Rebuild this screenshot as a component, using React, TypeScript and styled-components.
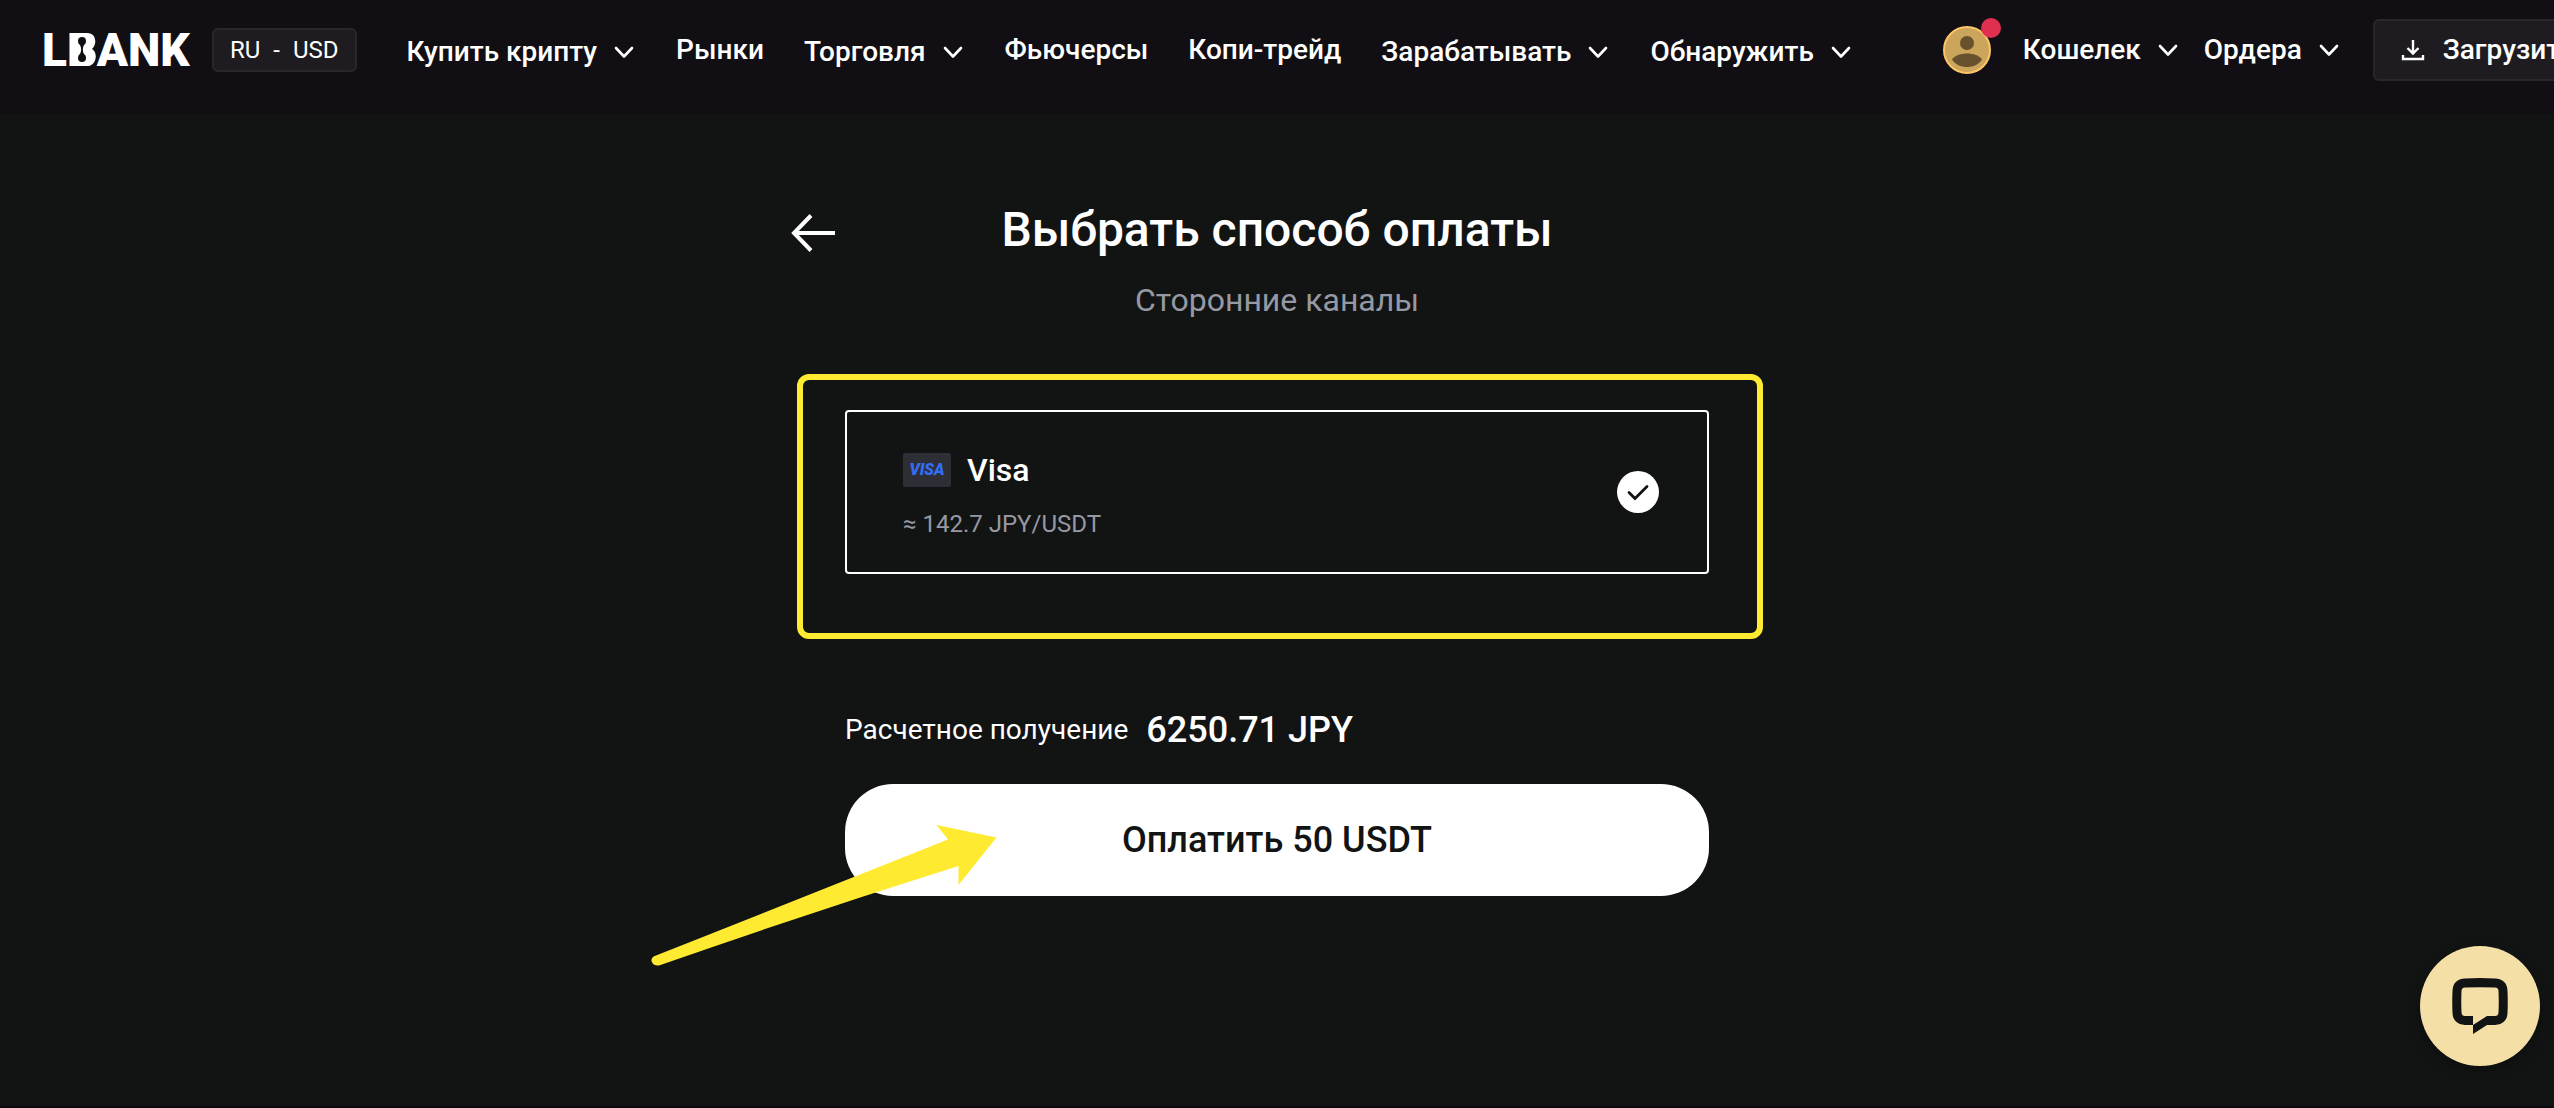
import React from "react";
import styled, { createGlobalStyle } from "styled-components";

const GlobalStyle = createGlobalStyle`
  * { box-sizing: border-box; }
  body {
    margin: 0;
    background: #121413;
    color: #fff;
    font-family: Roboto, "Noto Sans", sans-serif;
    overflow-x: hidden;
  }
  button, input { font: inherit; color: inherit; }
`;

const Page = styled.div`
  display: flex;
  flex-direction: column;
  min-height: 100vh;
  overflow: hidden;
  border-bottom: 2px solid #0b080e;
`;

const Header = styled.header`
  display: flex;
  align-items: center;
  padding: 0 42px 14px;
  height: 114px;
  background: #110f14;
  white-space: nowrap;
  font-size: 28px;
  line-height: 36px;
  font-weight: 500;
`;

const Logo = styled.a`
  position: relative;
  flex: none;
  width: 150px;
  margin-right: 20px;
  color: #fff;
  font-size: 46px;
  line-height: 52px;
  font-weight: 900;
  text-decoration: none;
`;

const LogoMark = styled.svg`
  position: absolute;
  left: 28px;
  top: 9px;
`;

const LocaleButton = styled.button`
  flex: none;
  display: flex;
  align-items: center;
  gap: 13px;
  height: 44px;
  padding: 0 16px;
  border: 2px solid #29272c;
  border-radius: 6px;
  background: #1e1c21;
  font-size: 24px;
  font-weight: 400;
`;

const Nav = styled.nav`
  flex: none;
  display: flex;
  align-items: center;
  gap: 40px;
  margin: 0 90px 0 50px;
`;

const NavLink = styled.a`
  color: #fff;
  text-decoration: none;
`;

const MenuButton = styled.button<{ $lowered?: boolean }>`
  display: flex;
  align-items: center;
  gap: 15px;
  padding: ${(p) => (p.$lowered ? "4px 0 0" : "0")};
  border: 0;
  background: none;
`;

const Account = styled.div`
  flex: none;
  display: flex;
  align-items: center;
`;

const AvatarButton = styled.button`
  position: relative;
  display: block;
  width: 48px;
  height: 48px;
  margin-right: 32px;
  padding: 0;
  border: 0;
  background: none;
`;

const Badge = styled.span`
  position: absolute;
  top: -8px;
  right: -10px;
  width: 20px;
  height: 20px;
  border-radius: 50%;
  background: #e03050;
`;

const AccountMenus = styled.div`
  display: flex;
  gap: 24px;
  margin-right: 32px;
`;

const DownloadButton = styled.button`
  display: flex;
  align-items: center;
  gap: 18px;
  height: 62px;
  padding: 0 26px;
  border: 2px solid #29272c;
  border-radius: 6px;
  background: #1e1c21;
`;

const Main = styled.main`
  width: 100%;
  max-width: 972px;
  margin: 0 auto;
  padding: 84px 0 60px;
`;

const TitleRow = styled.div`
  display: grid;
  grid-template-columns: 44px 1fr 44px;
  align-items: center;
`;

const BackButton = styled.button`
  display: block;
  height: 44px;
  padding: 0;
  border: 0;
  background: none;
`;

const Title = styled.h1`
  margin: 0;
  text-align: center;
  font-size: 48px;
  line-height: 64px;
  font-weight: 500;
`;

const Subtitle = styled.p`
  margin: 18px 0 0;
  text-align: center;
  color: #9699a3;
  font-size: 32px;
  line-height: 40px;
`;

const Panel = styled.form`
  margin: 90px 54px 0;
`;

const MethodArea = styled.div`
  position: relative;
`;

const Highlight = styled.div`
  position: absolute;
  inset: -36px -54px -65px -48px;
  border: 6px solid #ffea32;
  border-radius: 12px;
  pointer-events: none;
`;

const MethodCard = styled.label`
  display: flex;
  align-items: center;
  justify-content: space-between;
  padding-right: 48px;
  border: 2px solid #fff;
  border-radius: 4px;
`;

const MethodInfo = styled.div`
  display: flex;
  flex-direction: column;
  gap: 18px;
  padding: 38px 0 32px 56px;
`;

const MethodName = styled.div`
  display: flex;
  align-items: center;
  gap: 16px;
  font-size: 32px;
  line-height: 40px;
  font-weight: 500;
`;

const CardBrand = styled.span`
  display: grid;
  place-items: center;
  width: 48px;
  height: 34px;
  border-radius: 2px;
  background: #2e2e36;
  color: #346df1;
  font-size: 16px;
  line-height: 20px;
  font-style: italic;
  font-weight: 900;
`;

const Rate = styled.div`
  color: #9699a3;
  font-size: 24px;
  line-height: 32px;
`;

const RadioMark = styled.span`
  display: grid;
  place-items: center;
  > * { grid-area: 1 / 1; }
  > svg { pointer-events: none; }
`;

const Radio = styled.input`
  appearance: none;
  width: 42px;
  height: 42px;
  margin: 0;
  border-radius: 50%;
  background: #fff;
`;

const Summary = styled.div`
  display: flex;
  align-items: center;
  gap: 18px;
  margin-top: 132px;
  font-size: 28px;
  line-height: 48px;
`;

const Amount = styled.strong`
  font-size: 36px;
  font-weight: 500;
`;

const PayArea = styled.div`
  position: relative;
  margin-top: 30px;
`;

const PayButton = styled.button`
  display: block;
  width: 100%;
  height: 112px;
  border: 0;
  border-radius: 48px;
  background: #fff;
  color: #121413;
  font-size: 36px;
  font-weight: 500;
`;

const Pointer = styled.svg`
  position: absolute;
  left: -194px;
  top: 40px;
  pointer-events: none;
`;

const ChatButton = styled.button`
  position: fixed;
  right: 14px;
  bottom: 42px;
  display: grid;
  place-items: center;
  width: 120px;
  height: 120px;
  padding: 0;
  border: 0;
  border-radius: 50%;
  background: #f4dfa7;
  box-shadow: 0 4px 12px rgba(0, 0, 0, 0.3);
`;

const Chevron = () => (
  <svg width="24" height="24" viewBox="0 0 24 24" fill="none" aria-hidden="true">
    <path d="M4 8l8 8.5L20 8" stroke="#fff" strokeWidth="2.6" strokeLinecap="round" strokeLinejoin="round" />
  </svg>
);

type NavEntry = { label: string; menu?: boolean };

const navEntries: NavEntry[] = [
  { label: "Купить крипту", menu: true },
  { label: "Рынки" },
  { label: "Торговля", menu: true },
  { label: "Фьючерсы" },
  { label: "Копи-трейд" },
  { label: "Зарабатывать", menu: true },
  { label: "Обнаружить", menu: true },
];

export default function App() {
  return (
    <Page>
      <GlobalStyle />
      <Header>
        <Logo href="#">
          LBANK
          <LogoMark width="27" height="33" viewBox="0 0 27 33" aria-hidden="true">
            <path d="M0 0H17C27 0 27 12 22 16C28 19 27 33 17 33H0Z" fill="#fff" />
            <circle cx="12" cy="8" r="4" fill="#110f14" />
            <circle cx="12" cy="25" r="4" fill="#110f14" />
            <path d="M8.500 10C12 13.500 12 19.500 8.500 23H15.500C12 19.500 12 13.500 15.500 10Z" fill="#110f14" />
          </LogoMark>
        </Logo>
        <LocaleButton type="button">
          <span>RU</span>
          <span>-</span>
          <span>USD</span>
        </LocaleButton>
        <Nav>
          {navEntries.map(({ label, menu }) =>
            menu ? (
              <MenuButton key={label} type="button" $lowered>
                {label}
                <Chevron />
              </MenuButton>
            ) : (
              <NavLink key={label} href="#">
                {label}
              </NavLink>
            )
          )}
        </Nav>
        <Account>
          <AvatarButton type="button" aria-label="Профиль">
            <svg width="48" height="48" viewBox="0 0 48 48" aria-hidden="true">
              <circle cx="24" cy="24" r="23" fill="#cba55b" stroke="#fdc566" strokeWidth="2" />
              <circle cx="24" cy="17" r="7" fill="#67522d" />
              <path d="M9 33.500C14 25.500 34 25.500 39 33.500C33 43.500 15 43.500 9 33.500Z" fill="#67522d" />
            </svg>
            <Badge />
          </AvatarButton>
          <AccountMenus>
            <MenuButton type="button">
              Кошелек
              <Chevron />
            </MenuButton>
            <MenuButton type="button">
              Ордера
              <Chevron />
            </MenuButton>
          </AccountMenus>
          <DownloadButton type="button">
            <svg width="24" height="24" viewBox="0 0 24 24" fill="none" stroke="#fff" strokeWidth="2.4" aria-hidden="true">
              <path d="M12 2V15M6.500 10L12 15.500L17.500 10M2 17V21H22V17" />
            </svg>
            Загрузить
          </DownloadButton>
        </Account>
      </Header>

      <Main>
        <TitleRow>
          <BackButton type="button" aria-label="Назад">
            <svg width="44" height="44" viewBox="0 0 44 44" fill="none" stroke="#fff" strokeWidth="4" aria-hidden="true">
              <path d="M20 7.500L3 25L20 42.500M3 25H44" />
            </svg>
          </BackButton>
          <Title>Выбрать способ оплаты</Title>
        </TitleRow>
        <Subtitle>Сторонние каналы</Subtitle>

        <Panel onSubmit={(e) => e.preventDefault()}>
          <MethodArea>
            <MethodCard htmlFor="method-visa">
              <MethodInfo>
                <MethodName>
                  <CardBrand>VISA</CardBrand>
                  Visa
                </MethodName>
                <Rate>≈ 142.7 JPY/USDT</Rate>
              </MethodInfo>
              <RadioMark>
                <Radio id="method-visa" type="radio" name="method" defaultChecked />
                <svg width="42" height="42" viewBox="0 0 42 42" fill="none" aria-hidden="true">
                  <path d="M12 21.500L18 27.500L30 15.500" stroke="#121413" strokeWidth="2.800" strokeLinecap="round" />
                </svg>
              </RadioMark>
            </MethodCard>
            <Highlight />
          </MethodArea>

          <Summary>
            <span>Расчетное получение</span>
            <Amount>6250.71 JPY</Amount>
          </Summary>

          <PayArea>
            <PayButton type="submit">Оплатить 50 USDT</PayButton>
            <Pointer width="346" height="144" viewBox="0 0 346 144" aria-hidden="true">
              <path
                d="M5 131.500Q150 74 297 15.500L285.500 1L345.500 13.500L307.500 61V42Q158 89 8 141.500Q2 142 .5 137Q0 133 5 131.500Z"
                fill="#ffea32"
              />
            </Pointer>
          </PayArea>
        </Panel>
      </Main>

      <ChatButton type="button" aria-label="Чат поддержки">
        <svg width="56" height="56" viewBox="0 0 56 56" aria-hidden="true">
          <path
            fillRule="evenodd"
            fill="#121413"
            d="M13 0.500Q28 -.5 43 .5Q55 1 55.500 13Q56 24 55.500 35Q55 46 43 47H35L21 56V47H13Q1 46 .5 35Q0 24 .5 13Q1 1 13 .5ZM13 9.500Q9.500 9.500 9.500 13Q9 24 9.500 34Q9.500 38 13 38H21V47L35 38H43Q46.500 38 46.500 34Q47 24 46.500 13Q46.500 9.500 43 9.500Q28 9 13 9.500Z"
          />
        </svg>
      </ChatButton>
    </Page>
  );
}
